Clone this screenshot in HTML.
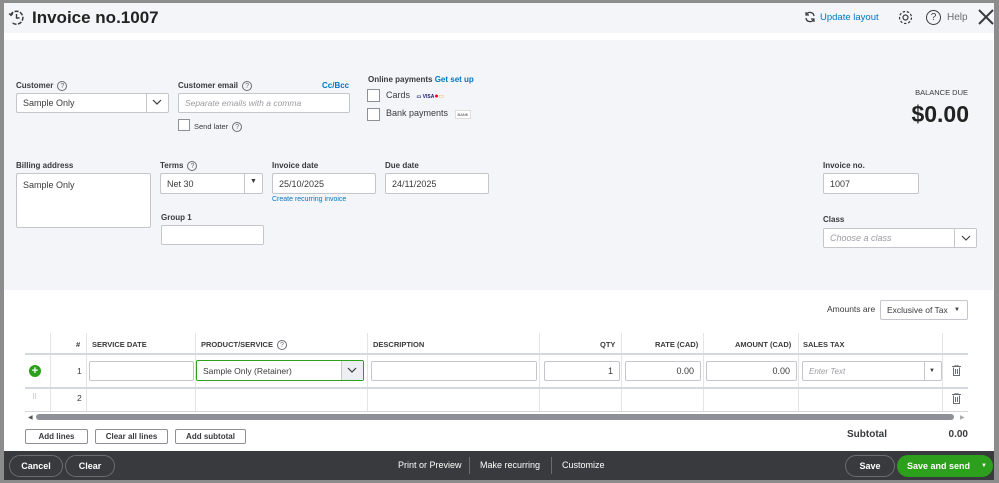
<!DOCTYPE html>
<html><head><meta charset="utf-8"><style>
*{box-sizing:border-box;margin:0;padding:0}
body{width:999px;height:483px;position:relative;overflow:hidden;background:#fff;font-family:"Liberation Sans",sans-serif;color:#393a3d}
.a{position:absolute}
.lbl{position:absolute;font-size:8px;font-weight:bold;color:#393a3d}
.inp{position:absolute;background:#fff;border:1px solid #c4c6cb;border-radius:2px;font-size:9px;color:#393a3d;padding-left:6px;display:flex;align-items:center}
.ph{color:#9a9ca1;font-style:italic}
.q{display:inline-block;width:10px;height:10px;border:1px solid #6b6c72;border-radius:50%;font-size:7px;text-align:center;line-height:9px;font-weight:normal;color:#6b6c72;margin-left:4px;vertical-align:middle}
.link{color:#0077c5}
.th{position:absolute;top:340px;font-size:7.5px;font-weight:bold;color:#393a3d}
.vl{position:absolute;width:1px;background:#e3e4e7}
.btn{position:absolute;border:1px solid #8d9096;border-radius:2px;font-size:8px;font-weight:bold;text-align:center;background:#fff;color:#393a3d}
.fb{position:absolute;border:1px solid #6b6c72;border-radius:12px;color:#fff;font-size:9px;font-weight:bold;text-align:center;line-height:20px;height:22px}
</style></head><body>
<div class="a" style="left:0;top:0;width:999px;height:3px;background:#8c8c8c"></div>
<div class="a" style="left:0;top:0;width:4px;height:483px;background:#8c8c8c"></div>
<div class="a" style="left:994px;top:0;width:5px;height:483px;background:#8c8c8c"></div>
<div class="a" style="left:0;top:480px;width:999px;height:3px;background:#8c8c8c"></div>
<div class="a" style="left:4px;top:3px;width:990px;height:30px;background:#f4f5f8"></div>
<svg class="a" style="left:8px;top:9px" width="17" height="17" viewBox="0 0 17 17"><path d="M2.5 6 A6.5 6.5 0 1 1 3.5 13" fill="none" stroke="#393a3d" stroke-width="1.5" stroke-dasharray="4 1.5"/><path d="M8.5 5v4h3" fill="none" stroke="#393a3d" stroke-width="1.4"/><path d="M1 4.5l2 2 2-2" fill="none" stroke="#393a3d" stroke-width="1.2"/></svg>
<div class="a" style="left:32px;top:8px;font-size:17px;font-weight:bold;color:#222">Invoice no.1007</div>
<svg class="a" style="left:804px;top:11px" width="12" height="12" viewBox="0 0 12 12"><path d="M10 5A4 4 0 0 0 2.5 3.5M2 7a4 4 0 0 0 7.5 1.5" fill="none" stroke="#393a3d" stroke-width="1.3"/><path d="M2 1v3h3M10 11V8H7" fill="none" stroke="#393a3d" stroke-width="1.2"/></svg>
<div class="a link" style="left:820px;top:12px;font-size:9.5px">Update layout</div>
<svg class="a" style="left:897px;top:9px" width="17" height="17" viewBox="0 0 17 17"><circle cx="8.5" cy="8.5" r="2.5" fill="none" stroke="#393a3d" stroke-width="1.2"/><circle cx="8.5" cy="8.5" r="6" fill="none" stroke="#393a3d" stroke-width="1.2" stroke-dasharray="2.5 1.7"/></svg>
<div class="a" style="left:926px;top:10px;width:15px;height:15px;border:1.3px solid #393a3d;border-radius:50%;font-size:10px;text-align:center;line-height:13px">?</div>
<div class="a" style="left:947px;top:12px;font-size:10px;color:#6b6c72">Help</div>
<svg class="a" style="left:978px;top:9px" width="16" height="16" viewBox="0 0 16 16"><path d="M1 1L15 15M15 1L1 15" stroke="#393a3d" stroke-width="2"/></svg>
<div class="a" style="left:4px;top:40px;width:989px;height:250px;background:#f4f5f8"></div>
<div class="lbl" style="left:16px;top:81px">Customer<span class="q">?</span></div>
<div class="inp" style="left:16px;top:93px;width:153px;height:20px">Sample Only</div>
<div class="a" style="left:146px;top:94px;width:22px;height:18px;border-left:1px solid #c4c6cb"></div>
<svg class="a" style="left:152px;top:99px" width="10" height="6"><path d="M1 1l4 4 4-4" fill="none" stroke="#393a3d" stroke-width="1.2"/></svg>
<div class="lbl" style="left:178px;top:81px">Customer email<span class="q">?</span></div>
<div class="a link" style="left:322px;top:81px;font-size:8px;font-weight:bold">Cc/Bcc</div>
<div class="inp" style="left:178px;top:93px;width:172px;height:20px"><span class="ph" style="font-size:8.5px">Separate emails with a comma</span></div>
<div class="a" style="left:178px;top:119px;width:12px;height:12px;border:1px solid #8d9096;background:#fff"></div>
<div class="a" style="left:194px;top:122px;font-size:7.5px">Send later<span class="q">?</span></div>
<div class="lbl" style="left:368px;top:75px">Online payments <span class="link">Get set up</span></div>
<div class="a" style="left:367px;top:89px;width:13px;height:13px;border:1px solid #8d9096;background:#fff"></div>
<div class="a" style="left:386px;top:90px;font-size:9px">Cards <span style="font-size:5px;color:#1a1f71;font-weight:bold;margin-left:4px">▭ VISA</span><span style="color:#eb001b;font-size:7px">●</span><span style="color:#f79e1b;font-size:6px">▭</span></div>
<div class="a" style="left:367px;top:108px;width:13px;height:13px;border:1px solid #8d9096;background:#fff"></div>
<div class="a" style="left:386px;top:108px;font-size:9px">Bank payments <span style="display:inline-block;border:1px solid #ddd;font-size:4px;padding:1px 2px;margin-left:4px;background:#fff">BANK</span></div>
<div class="a" style="left:900px;top:88px;width:68px;text-align:right;font-size:7.5px;color:#393a3d">BALANCE DUE</div>
<div class="a" style="left:880px;top:101px;width:89px;text-align:right;font-size:23px;font-weight:bold;color:#222">$0.00</div>
<div class="lbl" style="left:16px;top:161px">Billing address</div>
<div class="inp" style="left:16px;top:173px;width:135px;height:55px;align-items:flex-start;padding-top:6px">Sample Only</div>
<div class="lbl" style="left:160px;top:161px">Terms<span class="q">?</span></div>
<div class="inp" style="left:160px;top:173px;width:103px;height:21px">Net 30</div>
<div class="a" style="left:244px;top:174px;width:1px;height:19px;background:#c4c6cb"></div>
<div class="a" style="left:250px;top:178px;font-size:7px">▼</div>
<div class="lbl" style="left:272px;top:161px">Invoice date</div>
<div class="inp" style="left:272px;top:173px;width:104px;height:21px">25/10/2025</div>
<div class="a link" style="left:272px;top:196px;font-size:7px">Create recurring invoice</div>
<div class="lbl" style="left:385px;top:161px">Due date</div>
<div class="inp" style="left:385px;top:173px;width:104px;height:21px">24/11/2025</div>
<div class="lbl" style="left:161px;top:213px">Group 1</div>
<div class="inp" style="left:161px;top:225px;width:103px;height:20px"></div>
<div class="lbl" style="left:823px;top:161px">Invoice no.</div>
<div class="inp" style="left:823px;top:173px;width:96px;height:21px">1007</div>
<div class="lbl" style="left:823px;top:215px">Class</div>
<div class="inp" style="left:823px;top:228px;width:154px;height:20px"><span class="ph">Choose a class</span></div>
<div class="a" style="left:954px;top:229px;width:1px;height:18px;background:#c4c6cb"></div>
<svg class="a" style="left:961px;top:235px" width="10" height="6"><path d="M1 1l4 4 4-4" fill="none" stroke="#393a3d" stroke-width="1.1"/></svg>
<div class="a" style="left:827px;top:304px;font-size:8.5px;color:#393a3d">Amounts are</div>
<div class="inp" style="left:880px;top:300px;width:88px;height:20px;font-size:8.5px">Exclusive of Tax<span style="position:absolute;right:7px;font-size:6px">▼</span></div>
<div class="vl" style="left:50px;top:333px;height:78px"></div>
<div class="vl" style="left:86px;top:333px;height:78px"></div>
<div class="vl" style="left:195px;top:333px;height:78px"></div>
<div class="vl" style="left:367px;top:333px;height:78px"></div>
<div class="vl" style="left:539px;top:333px;height:78px"></div>
<div class="vl" style="left:621px;top:333px;height:78px"></div>
<div class="vl" style="left:703px;top:333px;height:78px"></div>
<div class="vl" style="left:798px;top:333px;height:78px"></div>
<div class="vl" style="left:942px;top:333px;height:78px"></div>
<div class="th" style="left:76px">#</div>
<div class="th" style="left:92px">SERVICE DATE</div>
<div class="th" style="left:201px">PRODUCT/SERVICE<span class="q">?</span></div>
<div class="th" style="left:373px">DESCRIPTION</div>
<div class="th" style="left:600px">QTY</div>
<div class="th" style="left:655px">RATE (CAD)</div>
<div class="th" style="left:735px">AMOUNT (CAD)</div>
<div class="th" style="left:803px">SALES TAX</div>
<div class="a" style="left:25px;top:353px;width:943px;height:2px;background:#d4d7dc"></div>
<div class="a" style="left:29px;top:365px;width:12px;height:12px;border-radius:50%;background:#2ca01c;color:#fff;font-size:11px;font-weight:bold;text-align:center;line-height:12px">+</div>
<div class="a" style="left:77px;top:366px;font-size:8.5px">1</div>
<div class="inp" style="left:89px;top:361px;width:105px;height:20px"></div>
<div class="inp" style="left:196px;top:360px;width:168px;height:21px;border-color:#2ca01c;font-size:8.5px">Sample Only (Retainer)</div>
<div class="a" style="left:341px;top:361px;width:22px;height:19px;background:#eceef1;border-left:1px solid #c4c6cb"></div>
<svg class="a" style="left:347px;top:367px" width="10" height="6"><path d="M1 1l4 4 4-4" fill="none" stroke="#393a3d" stroke-width="1.2"/></svg>
<div class="inp" style="left:371px;top:361px;width:166px;height:20px"></div>
<div class="inp" style="left:544px;top:361px;width:76px;height:20px;justify-content:flex-end;padding-right:6px">1</div>
<div class="inp" style="left:625px;top:361px;width:76px;height:20px;justify-content:flex-end;padding-right:6px">0.00</div>
<div class="inp" style="left:706px;top:361px;width:91px;height:20px;justify-content:flex-end;padding-right:6px">0.00</div>
<div class="inp" style="left:802px;top:361px;width:140px;height:20px"><span class="ph" style="font-size:8px">Enter Text</span><span style="position:absolute;right:6px;font-size:6px;font-style:normal">▼</span></div>
<div class="a" style="left:924px;top:362px;width:1px;height:18px;background:#c4c6cb"></div>
<svg class="a" style="left:952px;top:365px" width="9" height="11" viewBox="0 0 9 11"><path d="M0 1.5h9M3 1.5V0h3v1.5M1.5 2.5v8h6v-8M3.5 4v5M5.5 4v5" fill="none" stroke="#6b6c72" stroke-width="1"/></svg>
<div class="a" style="left:25px;top:387px;width:943px;height:2px;background:#d4d7dc"></div>
<div class="a" style="left:32px;top:393px;font-size:7px;color:#aaa">⠿</div>
<div class="a" style="left:77px;top:393px;font-size:8.5px">2</div>
<svg class="a" style="left:952px;top:393px" width="9" height="11" viewBox="0 0 9 11"><path d="M0 1.5h9M3 1.5V0h3v1.5M1.5 2.5v8h6v-8M3.5 4v5M5.5 4v5" fill="none" stroke="#6b6c72" stroke-width="1"/></svg>
<div class="a" style="left:25px;top:411px;width:943px;height:1px;background:#d4d7dc"></div>
<div class="a" style="left:28px;top:414px;font-size:6px;color:#555">◀</div>
<div class="a" style="left:36px;top:414px;width:918px;height:6px;border-radius:3px;background:#8d9096"></div>
<div class="a" style="left:960px;top:414px;font-size:6px;color:#aaa">▶</div>
<div class="btn" style="left:25px;top:429px;width:63px;height:15px;line-height:13px">Add lines</div>
<div class="btn" style="left:95px;top:429px;width:73px;height:15px;line-height:13px">Clear all lines</div>
<div class="btn" style="left:175px;top:429px;width:71px;height:15px;line-height:13px">Add subtotal</div>
<div class="a" style="left:847px;top:429px;font-size:10px;font-weight:bold">Subtotal</div>
<div class="a" style="left:920px;top:429px;width:48px;text-align:right;font-size:10px;font-weight:bold">0.00</div>
<div class="a" style="left:4px;top:451px;width:990px;height:29px;background:#393a3d"></div>
<div class="fb" style="left:9px;top:455px;width:54px">Cancel</div>
<div class="fb" style="left:65px;top:455px;width:50px">Clear</div>
<div class="a" style="left:398px;top:460px;font-size:9px;color:#fff">Print or Preview</div>
<div class="a" style="left:469px;top:457px;width:1px;height:17px;background:#6b6c72"></div>
<div class="a" style="left:480px;top:460px;font-size:9px;color:#fff">Make recurring</div>
<div class="a" style="left:551px;top:457px;width:1px;height:17px;background:#6b6c72"></div>
<div class="a" style="left:562px;top:460px;font-size:9px;color:#fff">Customize</div>
<div class="fb" style="left:845px;top:455px;width:50px">Save</div>
<div class="a" style="left:897px;top:455px;width:96px;height:22px;border-radius:12px;background:#2ca01c;color:#fff;font-size:9px;font-weight:bold;line-height:22px;padding-left:10px">Save and send<span style="position:absolute;right:6px;font-size:6px">▼</span></div>
</body></html>
